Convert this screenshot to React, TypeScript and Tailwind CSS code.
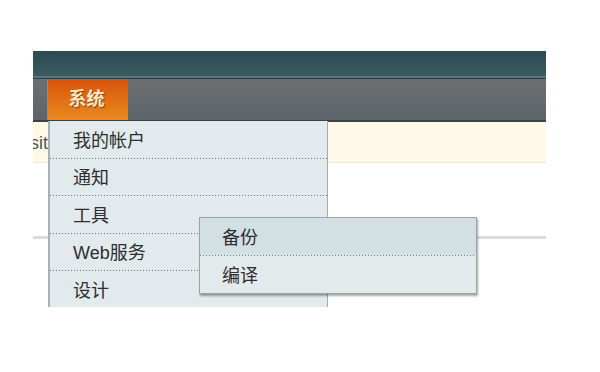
import React from "react";

const menuItems = ["我的帐户", "通知", "工具", "Web服务", "设计"];
const subItems = ["备份", "编译"];

// spaced dotted separator, like the old admin theme
function Dots() {
  return (
    <div className="h-px bg-[linear-gradient(to_right,#6d777c_1px,transparent_1px)] bg-[length:3px_1px]" />
  );
}

export default function App() {
  return (
    <div
      className="w-[600px] h-[372px] bg-white pt-[51px] pl-[33px]"
      style={{ fontFamily: '"Liberation Sans", "Noto Sans CJK SC", sans-serif' }}
    >
      <div className="relative w-[513px] h-[256px] overflow-hidden bg-white">
        {/* header */}
        <div className="h-[25px] bg-gradient-to-b from-[#2d4a53] to-[#3a5a61]" />
        <div className="h-[2px] bg-[#58767b]" />
        <div className="h-px bg-[#2b3d42]" />
        {/* nav */}
        <div className="flex h-[41px] bg-gradient-to-b from-[#6c6f71] to-[#5d656a]">
          <div className="w-[15px] border-r border-[#8a8f92]" />
          <div className="flex w-[80px] items-center justify-center pr-[3px] bg-gradient-to-b from-[#d6520b] to-[#ea8a1e]">
            <span className="text-[18px] font-bold text-[#fde8c8] [text-shadow:1px_1px_1px_rgba(80,30,0,0.6)]">
              系统
            </span>
          </div>
        </div>
        <div className="h-[2px] bg-[#3c423f]" />
        {/* notice bar */}
        <div className="flex h-[41px] items-center pt-[3px] border-b border-[#ece6d6] bg-[#fef8e9]">
          <span className="-ml-[3px] text-[18px] text-[#555]">sit</span>
        </div>
        <div className="mt-[73px] h-[3px] bg-[#dcdcdc]" />

        {/* dropdown */}
        <div className="absolute left-[15px] top-[70px] w-[280px] border-l-2 border-r border-l-[#a9b1b4] border-r-[#a4acaf] bg-[#e2eaed]">
          {menuItems.map((item, i) => (
            <div key={item}>
              <div className="flex h-[36.5px] items-center pt-[4px] pl-[23px] text-[18px] text-[#2e2e2e]">
                {item}
              </div>
              {i < menuItems.length - 1 && <Dots />}
            </div>
          ))}
        </div>

        {/* submenu */}
        <div className="absolute left-[166px] top-[166px] w-[278px] border border-[#9aa3a6] bg-[#e2eaec] shadow-[1px_2px_2px_rgba(0,0,0,0.35)]">
          {subItems.map((item, i) => (
            <div key={item}>
              <div
                className={
                  "flex h-[37px] items-center pt-[4px] pl-[22px] text-[18px] text-[#2e2e2e] " +
                  (i === 0 ? "bg-[#d2e0e4]" : "")
                }
              >
                {item}
              </div>
              {i === 0 && <Dots />}
            </div>
          ))}
        </div>
      </div>
    </div>
  );
}
